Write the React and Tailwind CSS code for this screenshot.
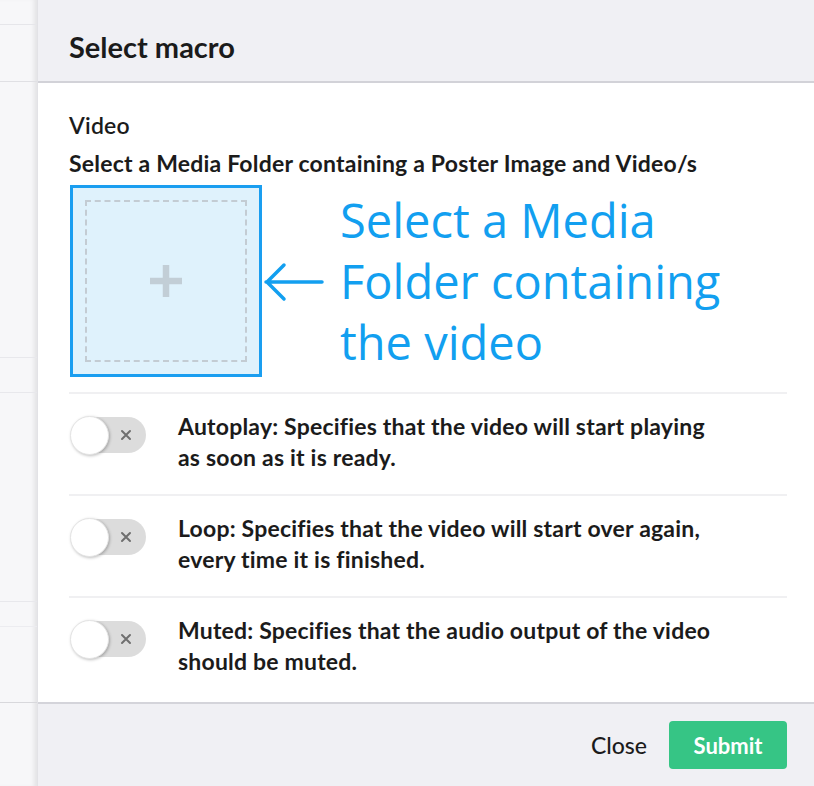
import React from "react";

const options = [
  {
    id: "autoplay",
    lines: ["Autoplay: Specifies that the video will start playing", "as soon as it is ready."],
  },
  {
    id: "loop",
    lines: ["Loop: Specifies that the video will start over again,", "every time it is finished."],
  },
  {
    id: "muted",
    lines: ["Muted: Specifies that the audio output of the video", "should be muted."],
  },
];

const Toggle = () => (
  <div className="relative mt-[5px] h-[38px] w-[76px] shrink-0">
    <div className="absolute left-[4px] top-[1px] flex h-[36px] w-[72px] items-center justify-end rounded-full bg-[#dcdcdc] pr-[14px]">
      <svg width="12" height="12" viewBox="0 0 12 12" className="text-[#6f6f6f]">
        <path d="M2 2 L10 10 M10 2 L2 10" stroke="currentColor" strokeWidth="2" strokeLinecap="round" />
      </svg>
    </div>
    <div className="absolute left-0 top-0 h-[39px] w-[39px] rounded-full border border-[#e4e4e4] bg-white shadow-[1px_1px_3px_rgba(0,0,0,0.25)]" />
  </div>
);

const App = () => {
  return (
    <div className="flex h-[786px] w-[814px] overflow-hidden bg-white font-['Lato',sans-serif] text-[#1b1b1b]">
      {/* page behind the modal */}
      <div className="flex w-[37px] shrink-0 flex-col bg-[#f7f7f9] shadow-[inset_-5px_0_4px_-2px_rgba(0,0,0,0.08)]">
        <div className="h-[25px] border-b border-[#e6e6ea]" />
        <div className="h-[57px] border-b border-[#e0e0e4]" />
        <div className="h-[276px] border-b border-[#e8e8ec]" />
        <div className="h-[35px] border-b border-[#e8e8ec]" />
        <div className="h-[209px] border-b border-[#e8e8ec]" />
        <div className="h-[25px] border-b border-[#ececf0]" />
        <div className="h-[76px] border-b border-[#d8d8dc]" />
        <div className="flex-1" />
      </div>

      {/* modal */}
      <div className="flex min-w-0 flex-1 flex-col border-l border-[#e2e2e6]">
        <div className="flex h-[83px] shrink-0 items-center border-b-2 border-[#d2d2d8] bg-[#f0f0f4] pl-[31px] pt-[12px]">
          <h1 className="text-[29px] font-bold leading-[36px]">Select macro</h1>
        </div>

        <div className="flex flex-1 flex-col pl-[31px] pr-[27px] pt-[29px]">
          <div className="text-[23px] font-semibold leading-[26px] tracking-[0.2px]">Video</div>
          <div className="mt-[12px] text-[23px] font-bold leading-[26px] tracking-[0.2px]">
            Select a Media Folder containing a Poster Image and Video/s
          </div>

          <div className="mt-[9px] flex items-center">
            <div className="ml-px flex h-[192px] w-[192px] shrink-0 items-center justify-center border-[3px] border-[#1a9ef0] bg-[#dff2fc] p-[12px]">
              <div className="flex h-full w-full items-center justify-center border-2 border-dashed border-[#c3ccd3]">
                <svg width="34" height="34" viewBox="0 0 34 34">
                  <path d="M17 1 V33 M1 17 H33" stroke="#c2ced6" strokeWidth="6.5" />
                </svg>
              </div>
            </div>
            <svg width="62" height="40" viewBox="0 0 62 40" className="ml-[1px] mt-[2px] shrink-0">
              <path d="M3 20 H59 M21 3 L4 20 L21 37" fill="none" stroke="#129ff0" strokeWidth="3.5" strokeLinecap="round" strokeLinejoin="round" />
            </svg>
            <div className="ml-[15px] font-['Open_Sans',sans-serif] text-[47px] leading-[61px] text-[#129ff0]">
              Select a Media
              <br />
              Folder containing
              <br />
              the video
            </div>
          </div>

          <div className="mt-[15px] flex flex-col">
            {options.map((opt) => (
              <div key={opt.id} className="flex h-[102px] items-start border-t-2 border-[#f0f0f2] pl-[1px] pt-[17px]">
                <Toggle />
                <div className="ml-[32px] text-[23px] font-bold leading-[31px] tracking-[0.2px]">
                  {opt.lines[0]}
                  <br />
                  {opt.lines[1]}
                </div>
              </div>
            ))}
          </div>
        </div>

        <div className="flex h-[84px] shrink-0 items-center justify-end gap-[22px] border-t-2 border-[#d4d4da] bg-[#f0f0f4] pr-[27px]">
          <button className="text-[23px] font-medium text-[#1b1b1b]">Close</button>
          <button className="h-[48px] w-[118px] rounded-[4px] bg-[#36c585] text-[22px] font-bold text-white">
            Submit
          </button>
        </div>
      </div>
    </div>
  );
};

export default App;
